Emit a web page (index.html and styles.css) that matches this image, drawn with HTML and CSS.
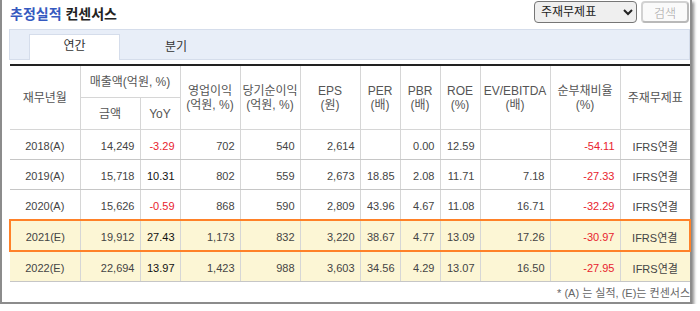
FILE: index.html
```html
<!DOCTYPE html>
<html lang="ko">
<head>
    <meta charset="UTF-8">
    <title>추정실적 컨센서스</title>
    <link rel="stylesheet" href="styles.css">
</head>
<body>
    <div class="panel">
        <!-- 제목 + 검색 -->
        <div class="head">
            <h2 class="title"><span class="blue">추정실적</span> 컨센서스</h2>
            <div class="search">
                <select class="sel">
                    <option>주재무제표</option>
                    <option>별도</option>
                </select>
                <button class="btn" disabled>검색</button>
            </div>
        </div>

        <!-- 연간 / 분기 탭 -->
        <div class="tabs">
            <a class="tab on">연간</a>
            <a class="tab">분기</a>
        </div>

        <table class="grid">
            <colgroup>
                <col style="width:70px"><col style="width:60px"><col style="width:40px">
                <col style="width:60px"><col style="width:60px"><col style="width:60px">
                <col style="width:40px"><col style="width:40px"><col style="width:40px">
                <col style="width:70px"><col style="width:70px"><col style="width:70px">
            </colgroup>
            <thead>
                <tr>
                    <th rowspan="2">재무년월</th>
                    <th colspan="2">매출액(억원, %)</th>
                    <th rowspan="2">영업이익<br>(억원, %)</th>
                    <th rowspan="2">당기순이익<br>(억원, %)</th>
                    <th rowspan="2">EPS<br>(원)</th>
                    <th rowspan="2">PER<br>(배)</th>
                    <th rowspan="2">PBR<br>(배)</th>
                    <th rowspan="2">ROE<br>(%)</th>
                    <th rowspan="2">EV/EBITDA<br>(배)</th>
                    <th rowspan="2">순부채비율<br>(%)</th>
                    <th rowspan="2">주재무제표</th>
                </tr>
                <tr>
                    <th>금액</th>
                    <th>YoY</th>
                </tr>
            </thead>
            <tbody>
                <tr>
                    <td class="yr">2018(A)</td>
                    <td>14,249</td><td class="neg">-3.29</td>
                    <td>702</td><td>540</td><td>2,614</td>
                    <td></td><td>0.00</td><td>12.59</td><td></td>
                    <td class="neg">-54.11</td><td class="std">IFRS연결</td>
                </tr>
                <tr>
                    <td class="yr">2019(A)</td>
                    <td>15,718</td><td class="pos">10.31</td>
                    <td>802</td><td>559</td><td>2,673</td>
                    <td>18.85</td><td>2.08</td><td>11.71</td><td>7.18</td>
                    <td class="neg">-27.33</td><td class="std">IFRS연결</td>
                </tr>
                <tr>
                    <td class="yr">2020(A)</td>
                    <td>15,626</td><td class="neg">-0.59</td>
                    <td>868</td><td>590</td><td>2,809</td>
                    <td>43.96</td><td>4.67</td><td>11.08</td><td>16.71</td>
                    <td class="neg">-32.29</td><td class="std">IFRS연결</td>
                </tr>
                <tr class="est cur">
                    <td class="yr">2021(E)</td>
                    <td>19,912</td><td class="pos">27.43</td>
                    <td>1,173</td><td>832</td><td>3,220</td>
                    <td>38.67</td><td>4.77</td><td>13.09</td><td>17.26</td>
                    <td class="neg">-30.97</td><td class="std">IFRS연결</td>
                </tr>
                <tr class="est">
                    <td class="yr">2022(E)</td>
                    <td>22,694</td><td class="pos">13.97</td>
                    <td>1,423</td><td>988</td><td>3,603</td>
                    <td>34.56</td><td>4.29</td><td>13.07</td><td>16.50</td>
                    <td class="neg">-27.95</td><td class="std">IFRS연결</td>
                </tr>
            </tbody>
        </table>

        <p class="note">* (A) 는 실적, (E)는 컨센서스</p>
    </div>
</body>
</html>
```

FILE: styles.css
```css
/* 기본 */
body {
    margin: 0;
    background: #fff;
    font-family: "Liberation Sans", "Noto Sans CJK KR", sans-serif;
    color: #333;
}

/* 바깥 박스 */
.panel {
    width: 681px;
    padding: 0 0 0 7px;
    border: 2px solid #8c8c8c;
    border-top: 0;
    box-shadow: 2px 2px 3px rgba(0, 0, 0, 0.45);
}

.head {
    display: flex;
    justify-content: space-between;
    align-items: flex-start;
    height: 29px;
}

.title {
    margin: 0;
    padding: 5px 0 0 1px;
    font-size: 14px;
    line-height: 18px;
    font-weight: bold;
    color: #222;
}

.title .blue {
    color: #3559c0;
}

.search {
    display: flex;
    gap: 4px;
    padding: 1px 1px 0 0;
}

.sel {
    width: 103px;
    height: 22px;
    font-size: 12px;
    font-family: "Liberation Sans", "Noto Sans CJK KR", sans-serif;
    color: #222;
    border-radius: 4px;
    padding: 0 2px;
}

.btn {
    width: 48px;
    height: 22px;
    font-size: 12px;
    font-family: "Liberation Sans", "Noto Sans CJK KR", sans-serif;
    border-radius: 4px;
}

/* 탭 */
.tabs {
    display: flex;
    align-items: flex-end;
    height: 31px;
    box-sizing: border-box;
    padding-left: 19px;
    margin-bottom: 4px;
    background: #e8eef8;
    border: 1px solid #d5ddeb;
}

.tab {
    width: 112px;
    height: 24px;
    line-height: 22px;
    text-align: center;
    font-size: 12px;
    color: #333;
    margin-bottom: -1px;
}

.tab.on {
    width: 89px;
    height: 25px;
    background: #fff;
    border: 1px solid #d5ddeb;
    border-bottom: 0;
}

/* 표 */
.grid {
    width: 680px;
    table-layout: fixed;
    border-collapse: collapse;
    border-top: 2px solid #222;
}

.grid th {
    height: 30px;
    padding: 1px 0 0;
    font-size: 12px;
    font-weight: normal;
    line-height: 14px;
    color: #555;
    border: 1px solid #d6d6d6;
    border-top: 0;
}

.grid th[rowspan] {
    padding: 0;
}

.grid td {
    height: 27px;
    padding: 2px 5px 0;
    font-size: 11px;
    text-align: right;
    color: #444;
    border: 1px solid #d6d6d6;
    border-top: 0;
    border-bottom-color: #c6c6c6;
    white-space: nowrap;
}

.grid th:first-child,
.grid td:first-child {
    border-left: 0;
}

.grid th:last-child,
.grid td:last-child {
    border-right: 0;
}

.grid td.yr,
.grid td.std {
    text-align: center;
}

.grid td.neg {
    color: #e8232e;
}

.grid td.pos {
    color: #111;
}

.grid tr.est td {
    background: #fcf6d5;
}

/* 현재 추정 연도 강조 */
.grid tr.cur td {
    border-top: 2px solid #ff8128;
    border-bottom: 2px solid #ff8128;
}

.grid tr.cur td:first-child {
    border-left: 2px solid #ff8128;
}

.grid tr.cur td:last-child {
    border-right: 2px solid #ff8128;
}

.note {
    margin: 0;
    padding: 4px 0 2px;
    text-align: right;
    font-size: 11px;
    line-height: 14px;
    color: #666;
}
```
